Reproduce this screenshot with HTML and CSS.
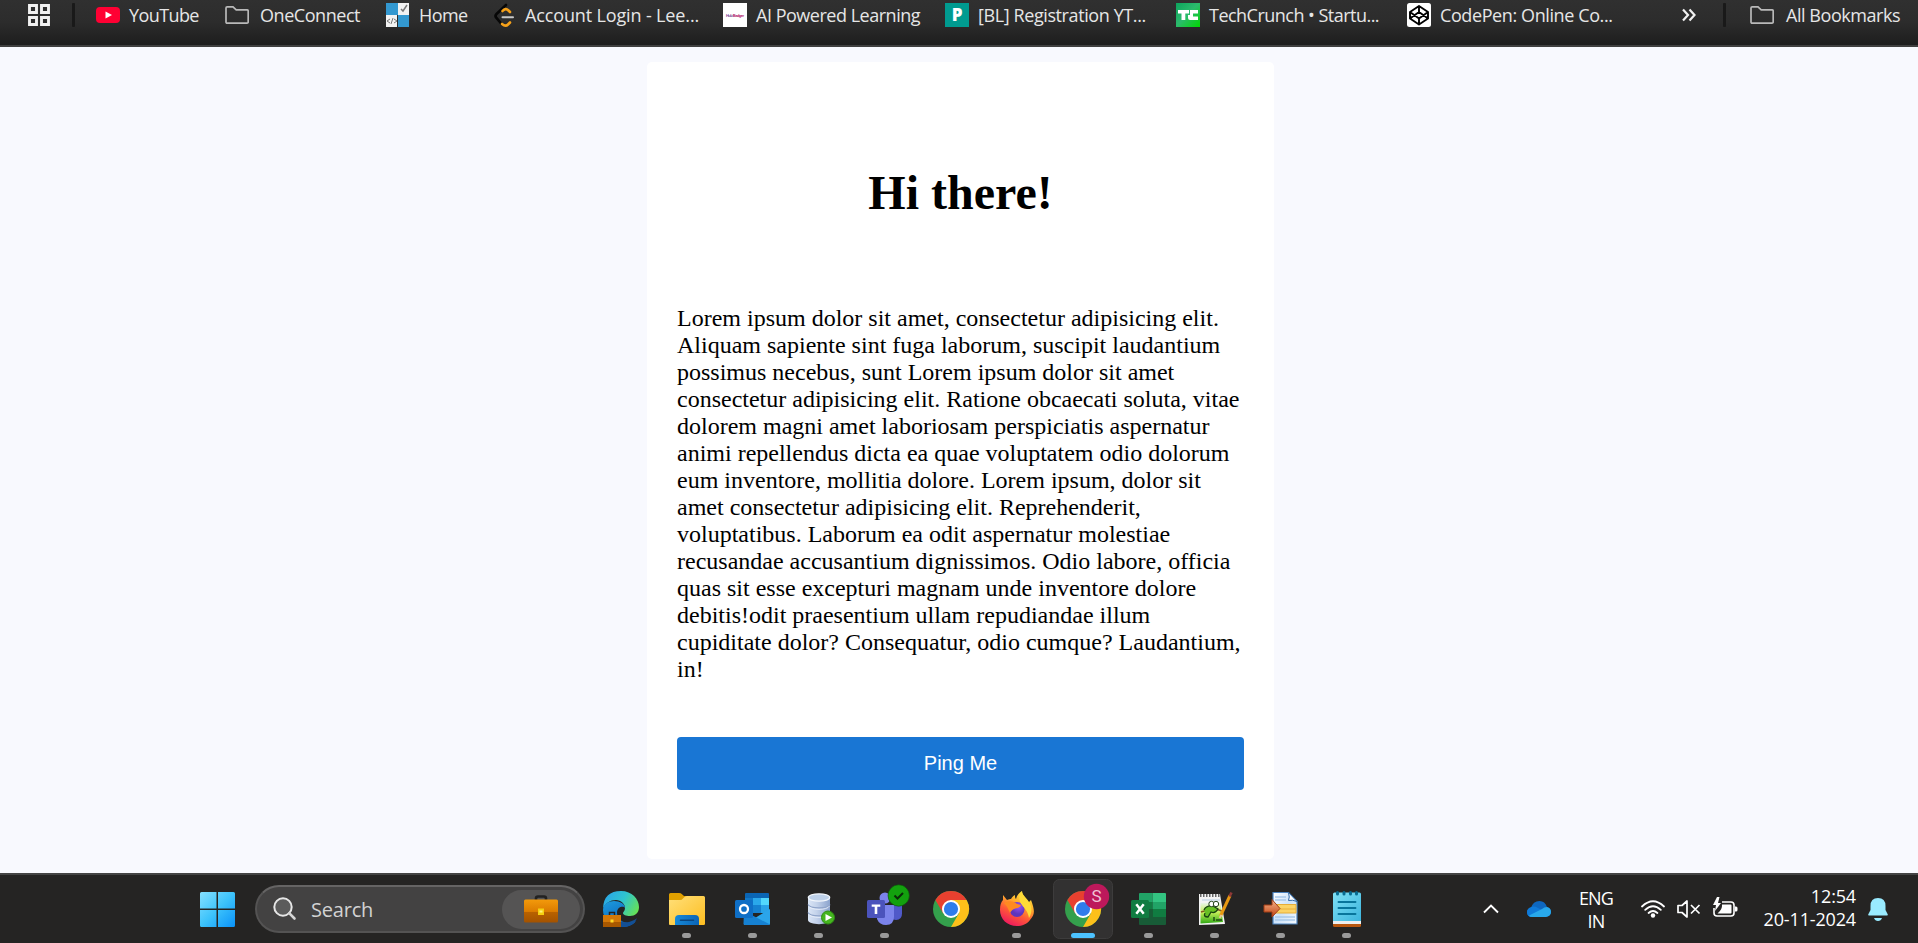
FILE: index.html
```
<!DOCTYPE html>
<html lang="en">
<head>
<meta charset="utf-8">
<title>Hi there!</title>
<link rel="stylesheet" href="styles.css">
</head>
<body>
<header class="bookmarks">
  <svg class="apps" width="22" height="22" viewBox="0 0 22 22"><path d="M1.5 1.5h7v7h-7zM13.5 1.5h7v7h-7zM1.5 13.5h7v7h-7zM13.5 13.5h7v7h-7z"/></svg>
  <i class="sep"></i>
  <div class="bm youtube"><svg width="24" height="24"><rect y="4" width="24" height="16" rx="4" fill="#ff0033"/><path d="M9.5 8.5l6.5 3.5-6.5 3.500z" fill="#fff"/></svg><span>YouTube</span></div>
  <div class="bm oneconnect"><svg width="24" height="24"><path d="M1 19V5q0-1.200 1.200-1.200H8l3.200 3H22q1.200 0 1.200 1.200v11q0 1.200-1.200 1.200H2.200Q1 20.200 1 19z" fill="none" stroke="#b9b9b9" stroke-width="1.700"/></svg><span>OneConnect</span></div>
  <div class="bm home"><svg width="24" height="24"><path d="M0 0h12v12H0zM12 12h11v12H12z" fill="#3398d0"/><path d="M12 0h11v12H12zM0 12h11v12H0z" fill="#f2f2f2"/><path d="M15 6l2 2 4-6" fill="none" stroke="#777" stroke-width="1.500"/><path d="M4 16l-3 2 3 2M8 16l3 2-3 2M7 15l-2 6" fill="none" stroke="#777" stroke-width="1"/></svg><span>Home</span></div>
  <div class="bm account"><svg width="24" height="24"><g fill="none" stroke-width="2.600" stroke-linecap="round"><path d="M14 2L4.500 11q-2 2 0 4l5 6" stroke="#070707"/><path d="M10.500 8q3-3.500 6-.5l1.500 1.500M10 21q3.500 3 6 .5l2-2" stroke="#f5a11a"/><path d="M10.500 14.200H21" stroke="#c8c8c8" stroke-width="2"/></g></svg><span>Account Login - Lee...</span></div>
  <div class="bm learning"><svg width="24" height="24"><rect width="24" height="24" fill="#fff"/><text x="3" y="13.500" class="badge-logo" textLength="18"><tspan fill="#7d3c98">Hub </tspan><tspan fill="#b0186c">Badger</tspan></text></svg><span>AI Powered Learning</span></div>
  <div class="bm registration"><svg width="24" height="24"><rect width="24" height="24" fill="#009b90"/><text x="12" y="18.200" class="fav-p">P</text></svg><span>[BL] Registration YT...</span></div>
  <div class="bm techcrunch"><svg width="24" height="24"><defs><linearGradient id="tc" x1="0" y1="0" x2="1" y2="1"><stop offset="0" stop-color="#0ca45d"/><stop offset=".48" stop-color="#2cba6d"/><stop offset="1" stop-color="#00d800"/></linearGradient></defs><rect width="24" height="24" fill="url(#tc)"/><path d="M2 7h11v3.500H9.300V17H5.500v-6.500H2zM14 7h8v3.500h-5v3h5V17h-8q-2 0-2-2V12h2z" fill="#fff"/></svg><span>TechCrunch • Startu...</span></div>
  <div class="bm codepen"><svg width="24" height="24"><rect width="24" height="24" rx="2.500" fill="#fff"/><path d="M12 3l9 6v6.500L12 21.500 3 15.500V9zM12 3v6M12 15.500v6M3 9l9 6.500L21 9M3 15.500L12 9l9 6.500" fill="none" stroke="#000" stroke-width="1.900" stroke-linejoin="round"/></svg><span>CodePen: Online Co...</span></div>
  <svg class="more" width="16" height="14" viewBox="0 0 16 14"><path d="M2 1.500L7 7l-5 5.500M8.500 1.500l5 5.500-5 5.500"/></svg>
  <i class="sep"></i>
  <div class="bm all"><svg width="24" height="24"><path d="M1 19V5q0-1.200 1.200-1.200H8l3.200 3H22q1.200 0 1.200 1.200v11q0 1.200-1.200 1.200H2.200Q1 20.200 1 19z" fill="none" stroke="#b9b9b9" stroke-width="1.700"/></svg><span>All Bookmarks</span></div>
</header>

<main class="page">
  <section class="card">
    <h1>Hi there!</h1>
    <p>Lorem ipsum dolor sit amet, consectetur adipisicing elit.<br>Aliquam sapiente sint fuga laborum, suscipit laudantium<br>possimus necebus, sunt Lorem ipsum dolor sit amet<br>consectetur adipisicing elit. Ratione obcaecati soluta, vitae<br>dolorem magni amet laboriosam perspiciatis aspernatur<br>animi repellendus dicta ea quae voluptatem odio dolorum<br>eum inventore, mollitia dolore. Lorem ipsum, dolor sit<br>amet consectetur adipisicing elit. Reprehenderit,<br>voluptatibus. Laborum ea odit aspernatur molestiae<br>recusandae accusantium dignissimos. Odio labore, officia<br>quas sit esse excepturi magnam unde inventore dolore<br>debitis!odit praesentium ullam repudiandae illum<br>cupiditate dolor? Consequatur, odio cumque? Laudantium,<br>in!</p>
    <button type="button">Ping Me</button>
  </section>
</main>

<footer class="taskbar">
  <svg class="windows" width="35" height="35"><defs><linearGradient id="win" gradientUnits="userSpaceOnUse" x1="0" y1="0" x2="35" y2="35"><stop stop-color="#86e0ff"/><stop offset=".5" stop-color="#3dc3fb"/><stop offset="1" stop-color="#0a92f8"/></linearGradient></defs><path d="M1.500 0H16.500V16.500H0V1.500Q0 0 1.500 0zM18 0h15.500Q35 0 35 1.500v15H18zM0 18h16.500v17h-15Q0 35 0 33.500zM18 18h17v15.500q0 1.500-1.500 1.500H18z" fill="url(#win)"/></svg>
  <div class="search">
    <svg class="lens" width="24" height="24"><circle cx="10" cy="10" r="8.700" fill="#5b5b5b" stroke="#e6e6e6" stroke-width="2"/><path d="M16.200 16.200l5.300 5.300" stroke="#d5d5d5" stroke-width="2.600" stroke-linecap="round"/></svg>
    <span>Search</span>
    <div class="highlight"><svg width="34" height="28"><defs><linearGradient id="bag" x2="0" y2="1"><stop stop-color="#f39a0b"/><stop offset=".52" stop-color="#dc7c00"/><stop offset=".56" stop-color="#b86200"/><stop offset="1" stop-color="#a35200"/></linearGradient></defs><path d="M12 5V3.500Q12 1.500 14 1.500h6q2 0 2 2V5" fill="none" stroke="#222" stroke-width="2.600"/><rect y="4.500" width="34" height="23" rx="1.500" fill="url(#bag)"/><rect x="14" y="13.500" width="6" height="6.500" fill="#f5cf10"/><rect x="15.500" y="15.500" width="3" height="2" fill="#fff27a"/></svg></div>
  </div>
  <nav class="apps-row">
    <svg class="app" viewBox="0 0 66 68"><defs><linearGradient id="e1" x1="0" y1=".3" x2="1" y2=".7"><stop stop-color="#2aa6e6"/><stop offset=".5" stop-color="#2fc4cf"/><stop offset="1" stop-color="#66e255"/></linearGradient><linearGradient id="e2" x2=".6" y2="1"><stop stop-color="#1c9de0"/><stop offset="1" stop-color="#0c5db4"/></linearGradient></defs><path d="M15 33Q16 16 33 16c11 0 18 8 18 16 0 6-4 9-9 9-4 0-7-1-7-3 0-1 2-2 2-5 0-4-4-8-9-8-6 0-10 3-13 8z" fill="url(#e1)"/><path d="M15 35c0-6 6-9 11-9 6 0 11 3 11 7-1-2-8-2-8 5 0 6 6 10 12 10 3 0 5-1 7-2-3 4-8 6-14 6-11 0-19-7-19-17z" fill="url(#e2)"/><path d="M27 40c1 7 9 8 14 7 4-1 7-3 8-4-2 6-8 9-15 9-5 0-8-5-7-12z" fill="#134f94"/><path d="M21.500 40v-2.500h5V40" fill="none" stroke="#222" stroke-width="1.500"/><path d="M15 40h18v12H15z" fill="#d37808"/><path d="M15 47h18v5H15z" fill="#a95800"/><rect x="22.500" y="44.500" width="3" height="3" fill="#ffdb26"/></svg>
    <svg class="app" viewBox="0 0 66 68"><defs><linearGradient id="fo" x2="1" y2="1"><stop stop-color="#ffe07a"/><stop offset="1" stop-color="#fdbd20"/></linearGradient><linearGradient id="fb" x2="1"><stop stop-color="#1689d8"/><stop offset="1" stop-color="#0b64b6"/></linearGradient></defs><path d="M15 28V19.500q0-1.500 1.500-1.500H25q2 0 3 1.200L30 21h5v7z" fill="#e0a000"/><path d="M15 25h11q2 0 3-1.500l1-1q1-1.500 3-1.500h16.500q1.500 0 1.500 1.500v26.500q0 1-1.500 1H16q-1 0-1-1z" fill="url(#fo)"/><path d="M21 50v-6q0-4 4-4h16q4 0 4 4v6z" fill="url(#fb)"/><path d="M26.500 45.300H39.500" stroke="#084580" stroke-width="1.500" stroke-linecap="round"/><rect class="dot" x="28" y="58" width="9" height="5" rx="2.500"/></svg>
    <svg class="app" viewBox="0 0 66 68"><path d="M26 18h22q1 0 1 1v15H25V19q0-1 1-1z" fill="#0a65b4"/><path d="M25 23h8v8h-8z" fill="#1178c8"/><path d="M33 23h8v7h-8z" fill="#2aa8ea"/><path d="M41 23h8v7h-8z" fill="#52d8fd"/><path d="M33 30h8v8h-8z" fill="#1581d0"/><path d="M41 30h8v8h-8z" fill="#29a3e8"/><path d="M50 34v14.500q0 1.500-1.500 1.500H24V37l11 6z" fill="#2ba5ea"/><path d="M24 36l26 13.500-1.500.5H25q-1.500 0-1.500-1.500z" fill="#1681d2"/><rect x="15" y="25" width="18" height="18" rx="1.500" fill="#0f6fc6"/><circle cx="24" cy="34" r="4" fill="none" stroke="#fff" stroke-width="2.300"/><rect class="dot" x="28" y="58" width="9" height="5" rx="2.500"/></svg>
    <svg class="app" viewBox="0 0 66 68"><defs><linearGradient id="db" x2="1"><stop stop-color="#dbe6f6"/><stop offset=".4" stop-color="#c3d2ea"/><stop offset="1" stop-color="#8ba3cd"/></linearGradient></defs><path d="M22 22v23c0 5.500 22 5.500 22 0V22z" fill="url(#db)"/><ellipse cx="33" cy="22.500" rx="10.700" ry="3.700" fill="#bed1ea" stroke="#f2f6fc" stroke-width="1.200"/><path d="M22 29.500c2 4.500 20 4.500 22 0M22 37.500c2 4.500 20 4.500 22 0" fill="none" stroke="#90a5ca" stroke-width="1.200"/><path d="M22.500 31c2 4.500 19 4.500 21 0M22.500 39c2 4.500 19 4.500 21 0" fill="none" stroke="#edf3fc" stroke-width=".8"/><circle cx="42" cy="42.500" r="6.500" fill="#45b51f" stroke="#2f8f14"/><path d="M39.500 39l6.500 3.500-6.500 3.500z" fill="#fff"/><rect class="dot" x="28" y="58" width="9" height="5" rx="2.500"/></svg>
    <svg class="app" viewBox="0 0 66 68"><circle cx="33" cy="23" r="5.500" fill="#7b83eb"/><path d="M38 30h12v8.500q0 6.500-6 6.500t-6-6.500z" fill="#5059c9"/><path d="M25 30h17v11.500q0 8.500-8 8.500-6.500 0-9-6z" fill="#7b83eb"/><rect x="15" y="25" width="18" height="18" rx="1.500" fill="#4b53bc"/><path d="M19.700 29.500h8.600v2.300H25.300V39h-2.600v-7.200h-3z" fill="#fff"/><circle cx="46.700" cy="20.500" r="10.700" fill="#13a10e" stroke="#0b4d0a" stroke-width=".6"/><path d="M42.500 20.500l3 3L51 18" fill="none" stroke="#0a2b09" stroke-width="2"/><rect class="dot" x="28" y="58" width="9" height="5" rx="2.500"/></svg>
    <svg class="app" viewBox="0 0 66 68"><defs><g id="chrome"><circle cx="33" cy="34" r="18" fill="#34a04c"/><path d="M17.400 25A18 18 0 0 1 48.600 25H33L25.200 38.500z" fill="#e8402f"/><path d="M48.600 25A18 18 0 0 1 33 52L40.800 38.500 33 25z" fill="#fdc01a"/><circle cx="33" cy="34" r="9" fill="#fff"/><circle cx="33" cy="34" r="7.100" fill="#2f7cec"/></g></defs><use href="#chrome"/></svg>
    <svg class="app" viewBox="0 0 66 68"><defs><linearGradient id="ff" x1=".8" y1="0" x2=".3" y2="1"><stop stop-color="#fff044"/><stop offset=".35" stop-color="#ffb02c"/><stop offset=".65" stop-color="#ff5a36"/><stop offset="1" stop-color="#ee1760"/></linearGradient><radialGradient id="fv" cx=".6" cy=".3"><stop stop-color="#9a52f5"/><stop offset="1" stop-color="#5e35bd"/></radialGradient></defs><path d="M19 20l4 5c2-1 3-1 4-1 1-2 2-3 4-4 0 2 0 3 1 4 1-4 3-6 6-8 0 4 2 5 4 8 2 2 2 3 2 4l3-3c4 11 4 14-1 20-3 4-8 6-13 6-10 0-17-7-17-16 0-5 1-8 3-10z" fill="url(#ff)"/><circle cx="33" cy="34.500" r="7.500" fill="url(#fv)"/><path d="M20 28c5-3 10-2 13 1l4 1c-1 3-4 3-7 4-2 1-3 2-4 4-2-4-2-6-6-10z" fill="#ff8a21"/><path d="M38 16c0 5 7 8 9 15 1 5 0 9-2 12-1-7-5-10-7-13-3-4-4-9 0-14z" fill="#ffdb38"/><rect class="dot" x="28" y="58" width="9" height="5" rx="2.500"/></svg>
    <svg class="app" viewBox="0 0 66 68"><rect x="3.500" y="4.500" width="59" height="59" rx="6" fill="#323131" stroke="#3d3c3c"/><use href="#chrome"/><circle cx="46.500" cy="21.500" r="12.700" fill="#bd185b"/><text x="46.500" y="27" class="badge-s">S</text><rect x="21" y="58" width="24" height="5" rx="2.500" fill="#4cc2ff"/></svg>
    <svg class="app" viewBox="0 0 66 68"><path d="M24 18h12.500v9H23v-8q0-1 1-1z" fill="#21a366"/><path d="M36.500 18H49q1 0 1 1v8H36.500z" fill="#33c481"/><path d="M23 27h13.500v7H23z" fill="#107c41"/><path d="M36.500 27H50v7H36.500z" fill="#21a366"/><path d="M23 34h13.500v8H23z" fill="#185c37"/><path d="M36.500 34H50v8H36.500z" fill="#107c41"/><path d="M23 42h27v7q0 1-1 1H24q-1 0-1-1z" fill="#185c37"/><rect x="15" y="25" width="18" height="18" rx="1.500" fill="#107c41"/><path d="M20.300 29.300l7.400 9.400M27.700 29.300l-7.400 9.400" stroke="#fff" stroke-width="2.500"/><rect class="dot" x="28" y="58" width="9" height="5" rx="2.500"/></svg>
    <svg class="app" viewBox="0 0 66 68"><defs><linearGradient id="np" x2="0" y2="1"><stop stop-color="#e9f5e9"/><stop offset=".45" stop-color="#c7f05a"/><stop offset="1" stop-color="#2ea813"/></linearGradient></defs><path d="M17 19h21l5 30-26 1z" fill="#f4f4f4"/><path d="M18.500 28h20l2.500 19-22.500 1.500z" fill="url(#np)"/><path d="M18 20.500h20" stroke="#666" stroke-width="3" stroke-dasharray="1.500 1.500"/><path d="M20 25h18" stroke="#b9cfe4"/><path d="M19 37q13-5 21-1" stroke="#865822" stroke-width="1.500" fill="none"/><path d="M22 35q2-5 9-4l5 3q-3 5-7 3l-3 5q-5 0-3-4" fill="#68bf24" stroke="#17430f" stroke-width="1.300"/><circle cx="29.500" cy="29" r="2.700" fill="#fff" stroke="#26471d"/><circle cx="34" cy="29" r="2.700" fill="#fff" stroke="#26471d"/><path d="M32 42v4M34 45h6" stroke="#214d13" stroke-width="1.500"/><path d="M38.500 41L48 20.500" stroke="#e89912" stroke-width="3"/><path d="M37.500 43l2-3" stroke="#e6c89b" stroke-width="2"/><path d="M47.500 21.500l2-4" stroke="#8f3937" stroke-width="2.600"/><rect class="dot" x="28" y="58" width="9" height="5" rx="2.500"/></svg>
    <svg class="app" viewBox="0 0 66 68"><defs><linearGradient id="pg" x2="1" y2="1"><stop stop-color="#fff"/><stop offset=".5" stop-color="#cbe2fa"/><stop offset="1" stop-color="#f6faff"/></linearGradient><linearGradient id="ar" x2="0" y2="1"><stop stop-color="#f6b58c"/><stop offset="1" stop-color="#c14312"/></linearGradient></defs><path d="M25 17.500h15.500l8.500 9V49H25z" fill="url(#pg)" stroke="#4b82bd" stroke-width="1.200"/><path d="M40.500 17.500q1.500 5 0 8 4-1 8.500 1z" fill="#fff" stroke="#326aa7"/><path d="M27 22h11M27 25h11M27 42h20M27 45h20" stroke="#a8c9ea" stroke-width="1.300"/><path d="M26 29.500h22v8.500H26z" fill="#fbd366" stroke="#e6ad38"/><path d="M26 34h22" stroke="#e9ae3a"/><path d="M16 30h8v-5.500L32 33.500l-8 8.500v-5h-8z" fill="url(#ar)" stroke="#a33d15"/><rect class="dot" x="28" y="58" width="9" height="5" rx="2.500"/></svg>
    <svg class="app" viewBox="0 0 66 68"><defs><linearGradient id="nt" x2="1" y2="1"><stop stop-color="#7fe0f5"/><stop offset="1" stop-color="#3cb5dd"/></linearGradient></defs><path d="M19 45h28v5.500q0 1.500-1.500 1.500h-25Q19 52 19 50.500z" fill="#b8560e"/><path d="M19 44h28v5H19z" fill="#eee"/><path d="M19 19q0-1.500 1.500-1.500h25q1.500 0 1.500 1.500v27H19z" fill="url(#nt)"/><path d="M23.500 17.500v1.500M30 17.500v1.500M36.500 17.500v1.500M42.500 17.500v1.500" stroke="#086b91" stroke-width="3" stroke-linecap="round"/><path d="M24.500 27h17M24.500 33h17M24.500 39h17" stroke="#08759b" stroke-width="1.900" stroke-linecap="round"/><rect class="dot" x="28" y="58" width="9" height="5" rx="2.500"/></svg>
  </nav>
  <div class="tray">
    <svg class="chev" width="16" height="10"><path d="M1 8.500L8 1.500l7 7" fill="none" stroke="#fff" stroke-width="1.900"/></svg>
    <svg class="cloud" width="24" height="16"><path d="M4 7Q6 0 12.500 0 18 0 20 6q4 1 4 5t-5 5H5q-5 0-5-5 0-3 4-4z" fill="#0e67bf"/><path d="M3 6.500q4-2 8 .5L19 11l-4 5H5q-5 0-5-5 0-3 3-4.500z" fill="#0f7ad8"/><path d="M2 14.500L15 8q2-2 5-2 4 1 4 5t-5 5H5q-2 0-3-1.500z" fill="#28a8ea"/></svg>
    <div class="lang"><span>ENG</span><span>IN</span></div>
    <svg class="wifi" width="24" height="18"><g fill="none" stroke="#fff" stroke-width="1.800" stroke-linecap="round"><path d="M1 6.500q11-10.500 22 0M4.200 9.800q7.800-7.200 15.600 0M7.600 13q4.400-4 8.800 0"/></g><circle cx="12" cy="15.500" r="2.200" fill="#fff"/></svg>
    <svg class="speaker" width="24" height="18"><path d="M1 5.500h4L10 1v16l-5-4.500H1z" fill="none" stroke="#fff" stroke-width="1.700" stroke-linejoin="round"/><path d="M14 5l8.500 8.500M22.500 5L14 13.500" stroke="#fff" stroke-width="1.700"/></svg>
    <svg class="battery" width="25" height="20"><path d="M9 5h9q3 0 3 3v8q0 3-3 3H4q-3 0-3-3v-5" fill="none" stroke="#fff" stroke-width="1.600"/><path d="M9 7.500h8.500q1 0 1 1v7q0 1-1 1H4.500q5-4 4.500-9z" fill="#fff"/><path d="M22 9.500h1q1.500 0 1.500 1.500v2q0 1.500-1.500 1.500h-1z" fill="#fff"/><path d="M4 0L0 8h3l-1 6 6-8H5l1.500-6z" fill="#fff"/></svg>
    <div class="clock"><span>12:54</span><span>20-11-2024</span></div>
    <svg class="bell" width="20" height="24"><path d="M10 0q7.500 0 7.500 8v4l2.300 4.500q.2 1-.8 1H1q-1 0-.8-1L2.500 12V8q0-8 7.500-8zM6 20h8q-1 3-4 3t-4-3z" fill="#99ebff"/></svg>
  </div>
</footer>
</body>
</html>
```

FILE: styles.css
```
* { box-sizing: border-box; }

body {
  margin: 0;
  height: 943px;
  overflow: hidden;
  display: flex;
  flex-direction: column;
  background: #f8f9fe;
  font-family: "Open Sans", "Noto Sans", sans-serif;
}

svg { display: block; flex: none; }

/* Bookmarks bar */
.bookmarks {
  height: 47px;
  flex: none;
  display: flex;
  align-items: flex-start;
  padding: 3px 0 0 28px;
  background: linear-gradient(#303030, #2c2c2c 50%, #1d1d1d);
  border-bottom: 2px solid #3f3f3f;
}
.apps { margin: 1px 22px 0 0; }
.apps path { fill: none; stroke: #f1f1f1; stroke-width: 2.9; }
.sep { width: 3px; height: 24px; border-radius: 1px; background: #191919; flex: none; }
.bm { display: flex; height: 24px; gap: 9px; flex: none; white-space: nowrap; }
.bm span { font-size: 18px; line-height: 24px; color: #e6e6e6; }
.youtube { margin-left: 21px; width: 129px; letter-spacing: -0.6px; }
.oneconnect { width: 161px; gap: 11px; letter-spacing: -0.45px; }
.home { width: 106px; letter-spacing: -0.6px; }
.account { width: 231px; letter-spacing: -0.14px; }
.learning { width: 222px; letter-spacing: -0.48px; }
.registration { width: 231px; letter-spacing: -0.4px; }
.techcrunch { width: 231px; letter-spacing: -0.52px; }
.codepen { width: 274px; letter-spacing: -0.4px; }
.more { margin: 5px 26px 0 0; }
.more path { fill: none; stroke: #f1f1f1; stroke-width: 2.2; }
.all { margin-left: 24px; gap: 12px; letter-spacing: -0.45px; }
.badge-logo { font: bold 4px "Liberation Sans", sans-serif; letter-spacing: 0; }
.fav-p { font: 800 17px "Open Sans", sans-serif; fill: #fff; text-anchor: middle; letter-spacing: 0; }

/* Page */
.page { flex: 1; padding: 15px 0 0 647px; }
.card {
  width: 627px;
  height: 797px;
  padding: 103px 30px 0;
  display: flex;
  flex-direction: column;
  background: #fff;
  border-radius: 5px;
  font-family: "Liberation Serif", "Times New Roman", serif;
  color: #000;
}
h1 { margin: 0 0 85px; font-size: 48px; line-height: 55px; text-align: center; }
p { margin: 0 0 54px; font-size: 24px; line-height: 27px; white-space: nowrap; }
button {
  width: 567px;
  height: 53px;
  padding: 0;
  border: 0;
  border-radius: 4px;
  background: #1976d4;
  color: #fff;
  font: 20px "Liberation Sans", Arial, sans-serif;
}

/* Taskbar */
.taskbar {
  height: 70px;
  flex: none;
  display: flex;
  align-items: flex-start;
  padding-left: 200px;
  background: #252423;
  border-top: 2px solid #444;
}
.windows { margin: 17px 20px 0 0; }
.search {
  width: 330px;
  height: 48px;
  margin: 10px 3px 0 0;
  padding: 0 3px 0 16px;
  display: flex;
  align-items: center;
  flex: none;
  background: #434242;
  border: 2px solid #545353;
  border-top-color: #656464;
  border-radius: 24px;
}
.lens { margin-right: 14px; }
.search span { font-size: 20px; letter-spacing: -0.2px; color: #d2d2d2; }
.highlight {
  width: 78px;
  height: 39px;
  margin-left: auto;
  display: grid;
  place-items: center;
  background: #555454;
  border-radius: 20px;
}
.apps-row { display: flex; width: 792px; flex: none; }
.app { width: 66px; height: 68px; }
.dot { fill: #9a9a9a; }
.badge-s { font: 17px Roboto, sans-serif; fill: #f0c3d5; text-anchor: middle; }

.tray { display: flex; align-items: flex-start; margin-left: 103px; color: #fff; font-size: 18px; }
.tray span { display: block; line-height: 23px; white-space: nowrap; }
.chev { margin: 29px 28px 0 0; }
.cloud { margin: 26px 0 0; }
.lang { width: 90px; margin-top: 12px; text-align: center; letter-spacing: -0.8px; }
.wifi { margin-top: 25px; }
.speaker { margin: 25px 0 0 12px; }
.battery { margin: 22px 0 0 12px; }
.clock { width: 118px; margin-top: 10px; text-align: right; letter-spacing: -0.15px; }
.bell { margin: 23px 0 0 12px; }
```
